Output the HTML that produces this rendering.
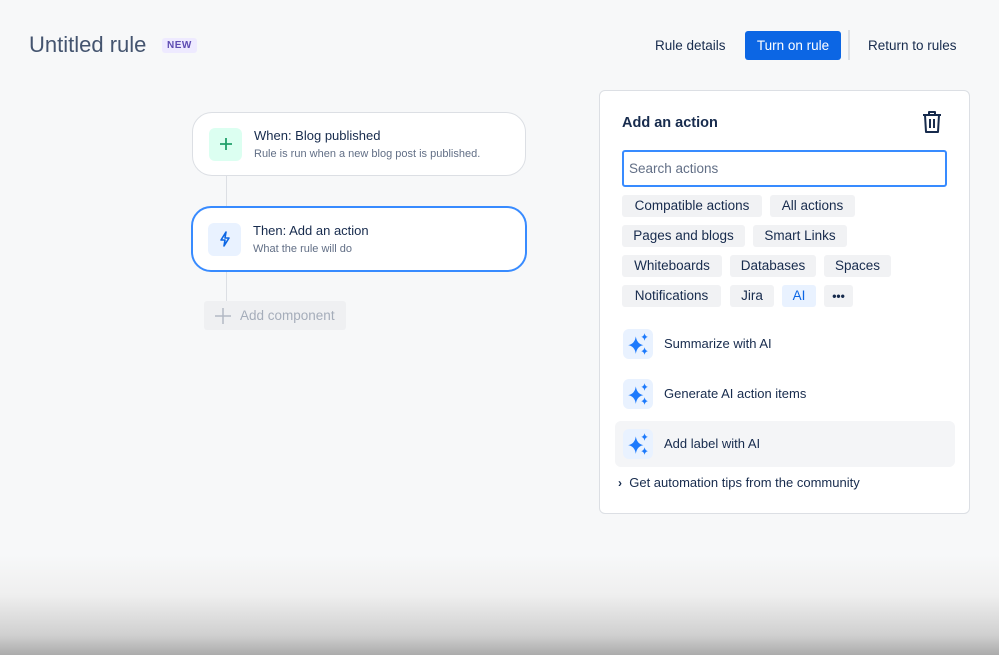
<!DOCTYPE html>
<html><head><style>
*{box-sizing:border-box;margin:0;padding:0}
body{width:999px;height:655px;overflow:hidden;background:#f7f8f9;font-family:"Liberation Sans",sans-serif;color:#172b4d;position:relative}
.abs{position:absolute}
.title{left:29px;top:32px;font-size:22px;color:#44546f}
.new{left:162px;top:38px;background:#eeeaff;color:#5e4db2;font-size:10px;font-weight:bold;padding:2px 5px;border-radius:3px;letter-spacing:.5px}
.hb{top:38px;font-size:13.5px;color:#172b4d}
.btn{left:745px;top:31px;width:96px;height:29px;background:#0c66e4;color:#fff;border-radius:3px;font-size:13.5px;text-align:center;line-height:29px}
.sep{left:848px;top:30px;width:2px;height:30px;background:#dcdfe4}
.card{background:#fff;border:1px solid #dcdfe4;border-radius:20px}
.ic{width:33px;height:33px;border-radius:6px;display:flex;align-items:center;justify-content:center}
.ct{font-size:13px;color:#172b4d}
.cs{font-size:11px;color:#626f86;margin-top:5px}
.panel{left:599px;top:90px;width:371px;height:424px;background:#fff;border:1px solid #dcdfe4;border-radius:6px}
.chip{position:absolute;height:22px;line-height:22px;background:#f1f2f4;border-radius:3px;font-size:13.5px;text-align:center;color:#172b4d}
.ai{position:absolute;left:23px;width:30px;height:30px;background:#e9f2ff;border-radius:6px;display:flex;align-items:center;justify-content:center}
.al{position:absolute;left:64px;font-size:13px;color:#172b4d}
</style></head><body>
<div class="abs title">Untitled rule</div>
<div class="abs new">NEW</div>
<div class="abs hb" style="left:655px">Rule details</div>
<div class="abs btn">Turn on rule</div>
<div class="abs sep"></div>
<div class="abs hb" style="left:868px">Return to rules</div>

<div class="abs" style="left:226px;top:176px;width:1px;height:125px;background:#dcdfe4"></div>
<div class="abs card" style="left:192px;top:112px;width:334px;height:64px;display:flex;align-items:center;padding-left:16px">
 <div class="ic" style="background:#dcfff1"><svg width="14" height="14"><path d="M7 1v12M1 7h12" stroke="#22a06b" stroke-width="1.8"/></svg></div>
 <div style="margin-left:12px"><div class="ct">When: Blog published</div><div class="cs">Rule is run when a new blog post is published.</div></div>
</div>
<div class="abs card" style="left:191px;top:206px;width:336px;height:66px;border:2px solid #388bff;display:flex;align-items:center;padding-left:15px">
 <div class="ic" style="background:#e9f2ff"><svg width="14" height="16" viewBox="0 0 14 16"><path d="M8 1L3 9h4l-1 6 5-8H7z" fill="none" stroke="#0c66e4" stroke-width="1.6" stroke-linejoin="round"/></svg></div>
 <div style="margin-left:12px"><div class="ct">Then: Add an action</div><div class="cs">What the rule will do</div></div>
</div>
<div class="abs" style="left:204px;top:301px;width:142px;height:29px;background:#eff0f2;border-radius:3px;display:flex;align-items:center;padding-left:10px;color:#a5adba;font-size:13.5px">
<svg width="18" height="18"><path d="M9 1v16M1 9h16" stroke="#b3b9c4" stroke-width="1.5"/></svg><span style="margin-left:8px">Add component</span></div>

<div class="abs panel">
 <div style="position:absolute;left:22px;top:24px;font-size:14.5px;font-weight:bold;color:#172b4d">Add an action</div>
 <svg style="position:absolute;left:321px;top:19px" width="22" height="24" viewBox="0 0 22 24"><path d="M2 5h18M8 5V2h6v3M4 5l1 17h12l1-17M9 9v9M13 9v9" fill="none" stroke="#172b4d" stroke-width="2" stroke-linejoin="round"/></svg>
 <div style="position:absolute;left:22px;top:59px;width:325px;height:37px;border:2px solid #388bff;border-radius:3px;font-size:13.5px;color:#626f86;padding:9px 5px">Search actions</div>
 <div class="chip" style="left:22px;top:104px;width:140px">Compatible actions</div>
 <div class="chip" style="left:170px;top:104px;width:85px">All actions</div>
 <div class="chip" style="left:22px;top:134px;width:123px">Pages and blogs</div>
 <div class="chip" style="left:153px;top:134px;width:94px">Smart Links</div>
 <div class="chip" style="left:22px;top:164px;width:100px">Whiteboards</div>
 <div class="chip" style="left:130px;top:164px;width:86px">Databases</div>
 <div class="chip" style="left:224px;top:164px;width:67px">Spaces</div>
 <div class="chip" style="left:22px;top:194px;width:99px">Notifications</div>
 <div class="chip" style="left:130px;top:194px;width:44px">Jira</div>
 <div class="chip" style="left:182px;top:194px;width:34px;background:#e9f2ff;color:#0c66e4">AI</div>
 <div class="chip" style="left:224px;top:194px;width:29px;font-weight:bold;font-size:12px">•••</div>
 <div style="position:absolute;left:15px;top:330px;width:340px;height:46px;background:#f4f5f7;border-radius:6px"></div>
 <div class="ai" style="top:238px"><svg width="24" height="24" viewBox="0 0 22 22"><path id="s" d="M9 4Q10 11 16 12Q10 13 9 20Q8 13 2 12Q8 11 9 4ZM17 1Q17.5 4 20 4.5Q17.5 5 17 8Q16.5 5 14 4.5Q16.5 4 17 1ZM17 14Q17.5 17 20 17.5Q17.5 18 17 21Q16.5 18 14 17.5Q16.5 17 17 14Z" fill="#1d7afc"/></svg></div>
 <div class="al" style="top:245px">Summarize with AI</div>
 <div class="ai" style="top:288px"><svg width="24" height="24" viewBox="0 0 22 22"><use href="#s"/></svg></div>
 <div class="al" style="top:295px">Generate AI action items</div>
 <div class="ai" style="top:338px"><svg width="24" height="24" viewBox="0 0 22 22"><use href="#s"/></svg></div>
 <div class="al" style="top:345px">Add label with AI</div>
 <div style="position:absolute;left:18px;top:384px;font-size:13px;color:#172b4d"><b style="font-size:12px">›</b>&nbsp; Get automation tips from the community</div>
</div>
<div class="abs" style="left:0;top:555px;width:999px;height:100px;background:linear-gradient(#f7f8f9 0%,#efefef 40%,#d0d0d0 80%,#ababab 100%)"></div>
</body></html>
